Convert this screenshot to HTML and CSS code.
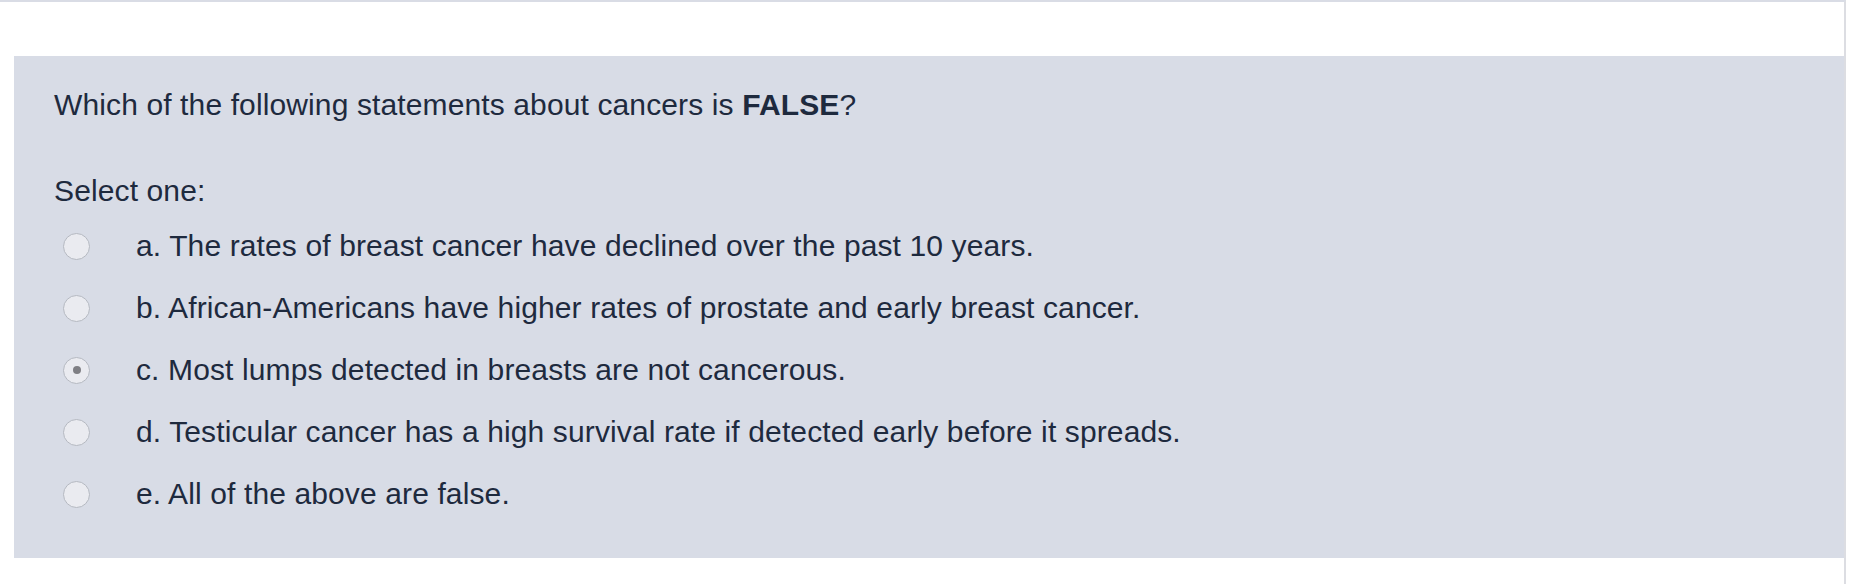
FILE: index.html
```html
<!DOCTYPE html>
<html>
<head>
<meta charset="utf-8">
<link rel="stylesheet" href="styles.css">
</head>
<body>
<div class="frame">
  <div class="panel">
    <p class="question">Which of the following statements about cancers is <strong>FALSE</strong>?</p>
    <div class="prompt">Select one:</div>
    <div class="answers">
      <label class="option"><span class="radio"></span><span class="text">a. The rates of breast cancer have declined over the past 10 years.</span></label>
      <label class="option"><span class="radio"></span><span class="text">b. African-Americans have higher rates of prostate and early breast cancer.</span></label>
      <label class="option"><span class="radio checked"></span><span class="text">c. Most lumps detected in breasts are not cancerous.</span></label>
      <label class="option"><span class="radio"></span><span class="text">d. Testicular cancer has a high survival rate if detected early before it spreads.</span></label>
      <label class="option"><span class="radio"></span><span class="text">e. All of the above are false.</span></label>
    </div>
  </div>
</div>
</body>
</html>
```

FILE: styles.css
```css
html, body {
  margin: 0;
  padding: 0;
  background: #ffffff;
}
body {
  font-family: "Liberation Sans", Arial, sans-serif;
  color: #1e2a3e;
  letter-spacing: 0.12px;
}
.frame {
  border-top: 2px solid #d9dce5;
  border-right: 2px solid #dcdde2;
  padding: 54px 0 0 14px;
  box-sizing: border-box;
  width: 1846px;
  height: 584px;
}
.panel {
  width: 1830px;
  height: 502px;
  box-sizing: border-box;
  background: #d8dce6;
  padding: 29px 40px 0 40px;
}
.question {
  margin: 0;
  font-size: 30px;
  line-height: 40px;
}
.question strong {
  font-weight: 700;
}
.prompt {
  margin-top: 46px;
  font-size: 30px;
  line-height: 40px;
}
.answers {
  display: flex;
  flex-direction: column;
  margin-top: 4px;
}
.option {
  display: flex;
  align-items: center;
  height: 62px;
  font-size: 30px;
}
.radio {
  width: 27px;
  height: 27px;
  box-sizing: border-box;
  border-radius: 50%;
  border: 1px solid #b5b9c1;
  background: #eaebf0;
  margin-left: 9px;
  margin-right: 46px;
  display: flex;
  align-items: center;
  justify-content: center;
  flex-shrink: 0;
}
.radio.checked::after {
  content: "";
  width: 8px;
  height: 8px;
  border-radius: 50%;
  background: #7f7f84;
}
```
